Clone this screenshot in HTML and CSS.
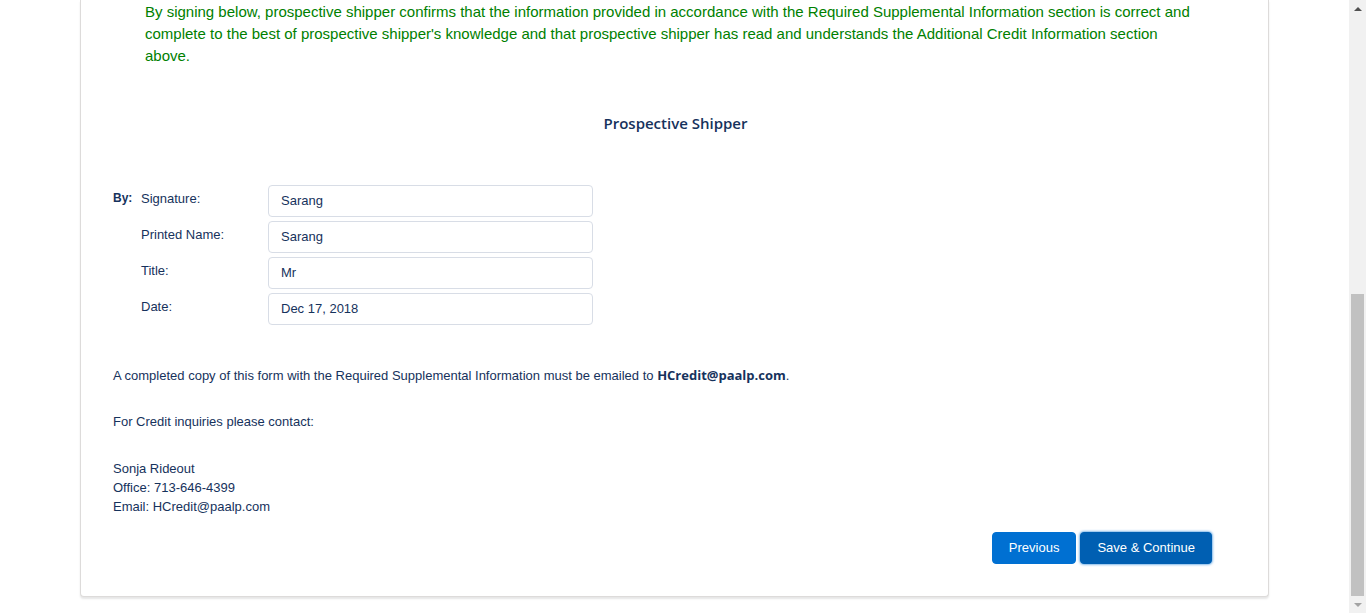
FILE: index.html
```html
<!DOCTYPE html>
<html lang="en">
<head>
<meta charset="utf-8">
<title>Prospective Shipper</title>
<link rel="stylesheet" href="styles.css">
</head>
<body>
<div class="layout">
  <div class="page">
    <div class="card">
      <p class="notice">By signing below, prospective shipper confirms that the information provided in accordance with the Required Supplemental Information section is correct and complete to the best of prospective shipper's knowledge and that prospective shipper has read and understands the Additional Credit Information section above.</p>

      <h2 class="heading">Prospective Shipper</h2>

      <div class="form">
        <div class="row">
          <span class="by">By:</span>
          <label class="label">Signature:</label>
          <div class="field">Sarang</div>
        </div>
        <div class="row">
          <span class="by"></span>
          <label class="label">Printed Name:</label>
          <div class="field">Sarang</div>
        </div>
        <div class="row">
          <span class="by"></span>
          <label class="label">Title:</label>
          <div class="field">Mr</div>
        </div>
        <div class="row">
          <span class="by"></span>
          <label class="label">Date:</label>
          <div class="field">Dec 17, 2018</div>
        </div>
      </div>

      <p class="info first">A completed copy of this form with the Required Supplemental Information must be emailed to <b class="email">HCredit@paalp.com</b>.</p>
      <p class="info">For Credit inquiries please contact:</p>
      <p class="info contact">Sonja Rideout<br>Office: 713-646-4399<br>Email: HCredit@paalp.com</p>

      <div class="actions">
        <button class="btn">Previous</button>
        <button class="btn btn-dark">Save &amp; Continue</button>
      </div>
    </div>
  </div>
  <div class="scrollbar">
    <div class="arrow up"></div>
    <div class="track"><div class="thumb"></div></div>
    <div class="arrow down"></div>
  </div>
</div>
</body>
</html>
```
FILE: styles.css
```css
* { box-sizing: border-box; }
html, body { margin: 0; padding: 0; height: 613px; overflow: hidden; background: #fff; }
body { font-family: "Liberation Sans", Arial, sans-serif; color: #16325c; }

.layout { display: flex; height: 613px; }
.page { flex: 1; padding-left: 80px; }

.card {
  width: 1189px;
  background: #fff;
  border: 1px solid #dddbda;
  border-top: none;
  border-radius: 0 0 4px 4px;
  box-shadow: 0 2px 2px rgba(0, 0, 0, 0.10);
  padding: 1px 56px 32px 32px;
}

.notice {
  margin: 0 0 0 32px;
  width: 1060px;
  font-size: 15px;
  line-height: 22px;
  color: #008000;
}

.heading {
  margin: 45px 0 0;
  text-align: center;
  font-family: "Open Sans", "Noto Sans", sans-serif;
  font-weight: 600;
  font-size: 15px;
  line-height: 22px;
  color: #16325c;
  padding-left: 26px;
}

.form { margin-top: 51px; display: flex; flex-direction: column; gap: 4px; }
.row { display: flex; align-items: flex-start; }
.by { width: 28px; font-size: 12px; font-weight: bold; line-height: 19px; padding-top: 4px; }
.label { width: 127px; font-size: 13px; line-height: 19px; padding-top: 4px; }
.field {
  width: 325px;
  height: 32px;
  border: 1px solid #d8dde6;
  border-radius: 4px;
  padding: 0 12px;
  font-size: 13px;
  line-height: 30px;
  color: #16325c;
}

.info { margin: 27px 0 0; font-size: 13px; line-height: 19px; }
.info.first { margin-top: 41px; }
.info.contact { margin-top: 28px; }
.email { font-family: "Open Sans", "Noto Sans", sans-serif; font-weight: 700; }

.actions { display: flex; justify-content: flex-end; gap: 4px; margin-top: 16px; }
.btn {
  height: 32px;
  padding: 0 16px;
  border: 1px solid #0070d2;
  border-radius: 4px;
  background: #0070d2;
  color: #fff;
  font-family: "Liberation Sans", Arial, sans-serif;
  font-size: 13px;
  line-height: 30px;
}
.btn-dark {
  background: #005fb2;
  border-color: #005fb2;
  box-shadow: 0 0 3px #0070d2;
}

.scrollbar { width: 17px; background: #f1f1f1; display: flex; flex-direction: column; }
.arrow { height: 17px; display: flex; align-items: center; justify-content: center; }
.arrow.up::before {
  content: ""; border-left: 4px solid transparent; border-right: 4px solid transparent;
  border-bottom: 4px solid #505050;
}
.arrow.down::before {
  content: ""; border-left: 4px solid transparent; border-right: 4px solid transparent;
  border-top: 4px solid #a3a3a3;
}
.track { flex: 1; padding: 0 2px; }
.thumb { margin-top: 277px; height: 302px; background: #c1c1c1; }
```
